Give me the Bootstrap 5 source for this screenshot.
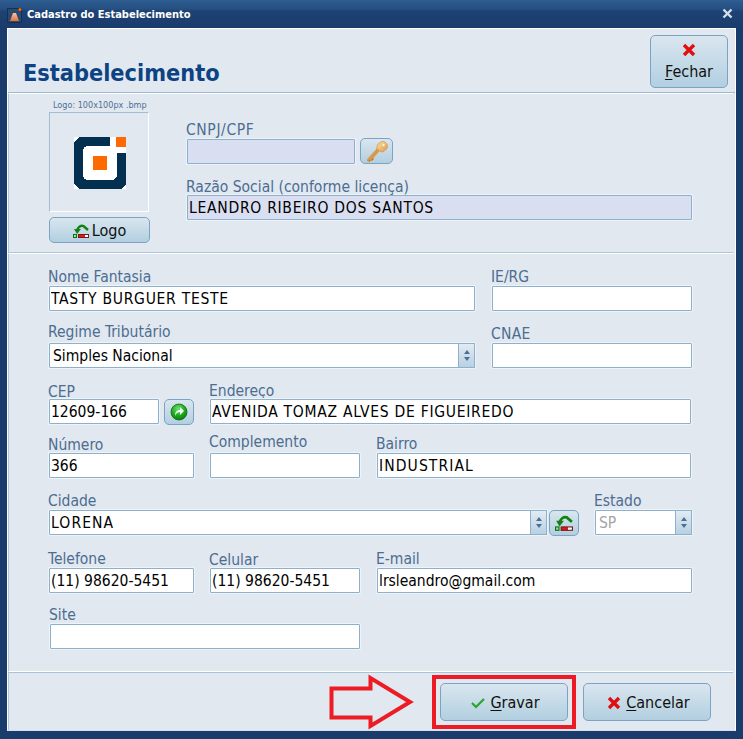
<!DOCTYPE html>
<html lang="pt-BR">
<head>
<meta charset="utf-8">
<title>Cadastro do Estabelecimento</title>
<link href="https://cdn.jsdelivr.net/npm/bootstrap@5.3.0/dist/css/bootstrap.min.css" rel="stylesheet">
<style>
html,body{margin:0;height:739px;overflow:hidden;background:#1a3c6c}
body{font-family:"DejaVu Sans Condensed","DejaVu Sans",sans-serif;font-stretch:condensed;font-size:16px;color:#000}
.win{width:743px;height:739px;background:#1a3c6c;border-radius:6px 6px 0 0;display:flex;flex-direction:column;padding:0 7px 8px 7px}
.titlebar{height:28px;flex:none;margin:0 -7px;padding:2px 7px 0;background:linear-gradient(#2f5f96 0,#2a5789 3px,#265083 9px,#1d4274 11px,#1a3c6c 28px);display:flex;align-items:center;color:#fff;font-size:11px;font-weight:700}
.appicon{width:15px;height:15px;margin-right:5px;flex:none}
.closex{margin-left:auto;margin-right:3px;margin-top:-3px}
.client{flex:1;background:#e1e8f0;border:1px solid #fff;border-bottom:1px solid #d8e0ea;display:flex;flex-direction:column;min-height:0}
.headpanel{height:64px;flex:none;display:flex;justify-content:space-between;padding:6px 7px 0 15px;border-bottom:1px solid #9dbad4}
.bigtitle{font-size:23.3px;font-weight:700;color:#0d4283;margin:0;line-height:28px;padding-top:24px}
.secone{height:160px;flex:none;border-top:1px solid #fff;border-bottom:1px solid #aec6da;border-left:1px solid #aec6da;margin-right:2px;display:flex;padding-left:40px}
.sectwo{height:419px;flex:none;border-top:1px solid #fff;border-bottom:1px solid #fff;border-left:1px solid #aec6da;margin-right:2px;padding-left:40px}
.logocol{width:103px;flex:none;display:flex;flex-direction:column;align-items:flex-start}
.logocap{font-size:9px;color:#4f6f94;line-height:12px;margin:5px 0 1px 4px;white-space:nowrap}
.logobox{width:100px;height:100px;border:1px solid #a5bbd2;border-right-color:#fff;border-bottom-color:#fff;display:flex;align-items:center;justify-content:center;padding:1px 0 0 1px}
.identcol{margin-left:35px;flex:1;padding-top:26px}
.lbl{display:block;margin:0 0 -1px -1px;padding-top:1px;font-size:15.5px;line-height:19px;color:#4d6d90;white-space:nowrap}
.lbl-caps{letter-spacing:.6px}
.lbl-capsb{letter-spacing:.3px}
.lbl.up2{margin-bottom:1px}
.lbl.dn1{margin-bottom:-2px}
.lbl.dn2{margin-bottom:-3px}
.lbl.razao-lbl{margin-top:13px}
.form-control.fld{height:25px;min-height:25px;padding:0 0 0 1px;border-radius:1px;border:1px solid #8db0cc;box-shadow:0 0 0 1px #eef3f8;font-size:15.5px;line-height:22px;color:#000;background-color:#fff;font-family:inherit}
.form-control.pad3{padding-left:3px}
.form-control.caps{letter-spacing:.72px}
.form-control.capsb{letter-spacing:1.1px}
.form-control.locked{background:#d9dff0}
.skin{background:linear-gradient(#d9e6ef,#b2cfe0);border:1px solid #7ba4c4;border-radius:5px;color:#111;padding:0;font-size:16px;display:flex;align-items:center;justify-content:center;font-family:inherit}
.skin:hover{background:linear-gradient(#d9e6ef,#b2cfe0);border-color:#7ba4c4;color:#111}
.btn-fechar{width:78px;height:53px;flex-direction:column;gap:6px;line-height:18px}
.btn-logo{width:101px;height:26px;margin-top:5px;gap:3px;padding-top:2px}
.btn-key{width:33px;height:26px;margin-left:5px;margin-top:-1px}
.btn-go{width:30px;height:26px;margin-left:5px;margin-bottom:-1px}
.btn-city{width:30px;height:26px;margin-left:2px;margin-bottom:-1px}
.btn-foot{width:128px;height:38px;gap:5px;padding:3px 0 0 3px}
.spinwrap{position:relative}
.spinbtn{position:absolute;right:0;top:0;width:17px;height:25px;border:1px solid #8db0cc;background:linear-gradient(#e2ebf3,#b8d1e2);display:flex;align-items:center;justify-content:center}
.frow{display:flex;align-items:flex-end}
.mt8{margin-top:8px}.mt11{margin-top:11px}.mt12{margin-top:12px}.mt13{margin-top:13px}.mt14{margin-top:14px}
.f-col{display:flex;flex-direction:column;flex:none}
.ml1{margin-left:1px}.ml16{margin-left:16px}.ml17{margin-left:17px}
.u{text-decoration:underline;text-underline-offset:2px}
.w426{width:426px}.w200{width:200px}.w110{width:110px}.w145{width:145px}.w150{width:150px}.w481{width:481px}.w314{width:314px}.w315{width:315px}.w498{width:498px}.w97{width:97px}.w310{width:310px}.w168{width:168px}.w505{width:505px}
.foot{flex:1;display:flex;justify-content:flex-end;align-items:center;padding-right:22px;border-top:1px solid #a9c2d8;margin-right:2px;border-left:1px solid #aec6da;min-height:0}
.redbox{border:4px solid #ed1c24;padding:4px;margin-right:7px;display:flex;flex:none;width:144px;height:54px;align-items:center;justify-content:center}
.arrow{flex:none;margin-right:18px}
.form-control.greyt{color:#a4a4a4}
</style>
</head>
<body>
<svg width="0" height="0" class="d-block">
  <defs>
    <radialGradient id="gg" cx=".45" cy=".3" r=".8"><stop offset="0" stop-color="#6fe06f"/><stop offset=".55" stop-color="#1ea51e"/><stop offset="1" stop-color="#0a6d0a"/></radialGradient>
    <linearGradient id="kg" x1="0" y1="0" x2="1" y2="1"><stop offset="0" stop-color="#fbe3ad"/><stop offset="1" stop-color="#d9994a"/></linearGradient>
    <linearGradient id="rb" x1="0" y1="0" x2="1" y2="0"><stop offset="0" stop-color="#e01818"/><stop offset=".6" stop-color="#e01818"/><stop offset=".65" stop-color="#fff"/><stop offset="1" stop-color="#fff"/></linearGradient>
    <linearGradient id="cone" x1="0" y1="0" x2="0" y2="1"><stop offset="0" stop-color="#f8c6a5"/><stop offset="1" stop-color="#e2703a"/></linearGradient>
    <symbol id="ico-up" viewBox="0 0 16 14"><path d="M4 6.500C5 3 8 1 10.500 2L15 6" fill="none" stroke="#128212" stroke-width="2.400"/><path d="M1 5h7L4 10z" fill="#128212"/><rect x=".5" y="10.500" width="3" height="3" fill="#9fe09f" stroke="#0f6f0f"/><rect x="5.500" y="10.500" width="10" height="3" fill="url(#rb)" stroke="#7c1a1a"/></symbol>
    <symbol id="ico-x" viewBox="0 0 14 14"><path d="M2 2l10 10M12 2 2 12" stroke="#e01010" stroke-width="3.400"/></symbol>
    <symbol id="ico-spin" viewBox="0 0 8 11"><path d="M4 0l3 4H1zM4 11 1 7h6z" fill="#4b6f94"/></symbol>
  </defs>
</svg>
<div class="win">
  <div class="titlebar">
    <svg class="appicon" viewBox="0 0 15 15"><rect x=".5" y=".5" width="14" height="14" fill="#2b4a6f" stroke="#16304f"/><path d="M3 13 6 5h3l3 8z" fill="url(#cone)"/><circle cx="13" cy="1.500" r="1.500" fill="#ff6a00"/></svg>
    <span>Cadastro do Estabelecimento</span>
    <svg class="closex" width="11" height="11" viewBox="0 0 11 11"><path d="M1.500 1.500l8 8M9.500 1.500l-8 8" stroke="#d3e0ec" stroke-width="2.400"/></svg>
  </div>
  <div class="client">
    <div class="headpanel">
      <h1 class="bigtitle">Estabelecimento</h1>
      <button class="btn skin btn-fechar"><svg width="14" height="14"><use href="#ico-x"/></svg><span><span class="u">F</span>echar</span></button>
    </div>
    <div class="secone">
      <div class="logocol">
        <div class="logocap">Logo: 100x100px .bmp</div>
        <div class="logobox">
          <svg width="52" height="52" viewBox="0 0 52 52" shape-rendering="crispEdges"><rect width="52" height="52" fill="#fff"/><path d="M5 0H36V9H15Q9 9 9 15V37Q9 43 15 43H37Q43 43 43 37V16H52V47L47 52H5L0 47V5Z" fill="#033050"/><rect x="42" y="0" width="10" height="10" fill="#ff6a00"/><rect x="19" y="19" width="14" height="14" fill="#ff6a00"/></svg>
        </div>
        <button class="btn skin btn-logo"><svg width="16" height="14"><use href="#ico-up"/></svg><span>Logo</span></button>
      </div>
      <div class="identcol">
        <label class="lbl lbl-caps">CNPJ/CPF</label>
        <div class="d-flex">
          <input class="form-control fld locked w168">
          <button class="btn skin btn-key"><svg width="24" height="22" viewBox="0 0 24 22"><path d="M4 20l10-11" stroke="#d9994a" stroke-width="4" stroke-linecap="round"/><path d="M6.500 20.500l2-2M4 21l1-1" stroke="#b9772c" stroke-width="1.200"/><path d="M13 4l4-2.500c2.500-.5 5 1.500 5.500 4l-.5 3-4 3.500-3-.5-3.500-3.500z" fill="url(#kg)" stroke="#d9994a" stroke-width=".8"/><circle cx="18.500" cy="5" r="1.200" fill="#fff3d6"/></svg></button>
        </div>
        <label class="lbl razao-lbl dn1">Razão Social (conforme licença)</label>
        <input class="form-control fld locked caps w505" value="LEANDRO RIBEIRO DOS SANTOS">
      </div>
    </div>
    <div class="sectwo">
      <div class="frow mt13">
        <div class="f-col w426"><label class="lbl">Nome Fantasia</label><input class="form-control fld caps" value="TASTY BURGUER TESTE"></div>
        <div class="f-col w200 ml17"><label class="lbl">IE/RG</label><input class="form-control fld"></div>
      </div>
      <div class="frow mt11">
        <div class="f-col w426"><label class="lbl up2">Regime Tributário</label><div class="spinwrap"><input class="form-control fld pad3" value="Simples Nacional"><span class="spinbtn"><svg width="8" height="11"><use href="#ico-spin"/></svg></span></div></div>
        <div class="f-col w200 ml17"><label class="lbl lbl-capsb">CNAE</label><input class="form-control fld"></div>
      </div>
      <div class="frow mt13">
        <div class="f-col w145"><label class="lbl dn2">CEP</label><div class="d-flex align-items-start"><input class="form-control fld w110" value="12609-166"><button class="btn skin btn-go"><svg width="18" height="18" viewBox="0 0 18 18"><circle cx="9" cy="9" r="8" fill="url(#gg)" stroke="#0b6b0b" stroke-width=".8"/><path d="M5 13c0-4 2-6 5-6V4l4 4-4 4V9c-2 0-4 1-5 4z" fill="#eaffea"/></svg></button></div></div>
        <div class="f-col w481 ml16"><label class="lbl dn1">Endereço</label><input class="form-control fld caps" value="AVENIDA TOMAZ ALVES DE FIGUEIREDO"></div>
      </div>
      <div class="frow mt8">
        <div class="f-col w145"><label class="lbl dn1">Número</label><input class="form-control fld" value="366"></div>
        <div class="f-col w150 ml16"><label class="lbl up2">Complemento</label><input class="form-control fld"></div>
        <div class="f-col w314 ml17"><label class="lbl">Bairro</label><input class="form-control fld capsb" value="INDUSTRIAL"></div>
      </div>
      <div class="frow mt13">
        <div class="f-col w498"><label class="lbl">Cidade</label><div class="spinwrap"><input class="form-control fld capsb" value="LORENA"><span class="spinbtn"><svg width="8" height="11"><use href="#ico-spin"/></svg></span></div></div>
        <button class="btn skin btn-city"><svg width="18" height="16"><use href="#ico-up"/></svg></button>
        <div class="f-col w97 ml16"><label class="lbl">Estado</label><div class="spinwrap"><input class="form-control fld greyt pad3" value="SP"><span class="spinbtn"><svg width="8" height="11"><use href="#ico-spin"/></svg></span></div></div>
      </div>
      <div class="frow mt14">
        <div class="f-col w145"><label class="lbl">Telefone</label><input class="form-control fld" value="(11) 98620-5451"></div>
        <div class="f-col w150 ml16"><label class="lbl dn1">Celular</label><input class="form-control fld" value="(11) 98620-5451"></div>
        <div class="f-col w315 ml17"><label class="lbl">E-mail</label><input class="form-control fld" value="lrsleandro@gmail.com"></div>
      </div>
      <div class="frow mt12">
        <div class="f-col w310 ml1"><label class="lbl">Site</label><input class="form-control fld"></div>
      </div>
    </div>
    <div class="foot">
      <svg class="arrow" width="85" height="56" viewBox="0 0 85 56"><path d="M2.500 14.500H41.500V4L81 28 41.500 52V43.500H2.500Z" fill="none" stroke="#ed1c24" stroke-width="4"/></svg>
      <div class="redbox"><button class="btn skin btn-foot"><svg width="14" height="12" viewBox="0 0 14 12"><path d="M1 6l4 4 8-8" fill="none" stroke="#2aa52a" stroke-width="2.200"/></svg><span><span class="u">G</span>ravar</span></button></div>
      <button class="btn skin btn-foot"><svg width="14" height="14"><use href="#ico-x"/></svg><span><span class="u">C</span>ancelar</span></button>
    </div>
  </div>
</div>
<script src="https://cdn.jsdelivr.net/npm/bootstrap@5.3.0/dist/js/bootstrap.bundle.min.js"></script>
</body>
</html>
